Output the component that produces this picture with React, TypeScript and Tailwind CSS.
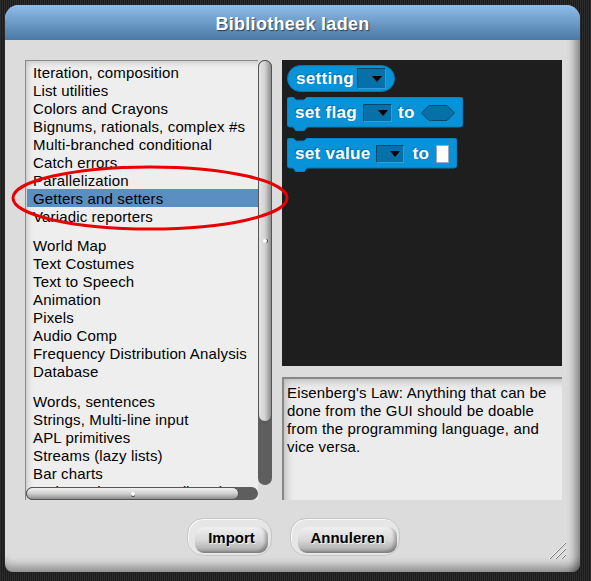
import React from "react";

const groups: { items: string[]; gapAfter?: string }[] = [
  {
    items: [
      "Iteration, composition",
      "List utilities",
      "Colors and Crayons",
      "Bignums, rationals, complex #s",
      "Multi-branched conditional",
      "Catch errors",
      "Parallelization",
      "Getters and setters",
      "Variadic reporters",
    ],
    gapAfter: "h-[11px]",
  },
  {
    items: [
      "World Map",
      "Text Costumes",
      "Text to Speech",
      "Animation",
      "Pixels",
      "Audio Comp",
      "Frequency Distribution Analysis",
      "Database",
    ],
    gapAfter: "h-[12px]",
  },
  {
    items: [
      "Words, sentences",
      "Strings, Multi-line input",
      "APL primitives",
      "Streams (lazy lists)",
      "Bar charts",
      "Web services access (https)",
    ],
  },
];

function Drop({ className }: { className: string }) {
  return (
    <div
      className={
        "flex items-center justify-end pr-[3px] bg-[#0670a8] border border-t-[#03466b] border-l-[#03466b] border-b-[#2a9fd9] border-r-[#2a9fd9] " +
        className
      }
    >
      <div className="w-0 h-0 border-l-[5px] border-r-[5px] border-t-[6px] border-l-transparent border-r-transparent border-t-black" />
    </div>
  );
}

function Cmd({ w, className, children }: { w: number; className: string; children: React.ReactNode }) {
  const H = 30;
  const d = `M0,3 Q0,0 3,0 H6 L9,3 H17 L20,0 H${w - 3} Q${w},0 ${w},3 V${H - 3} Q${w},${H} ${w - 3},${H} H20 L17,${H + 4} H9 L6,${H} H3 Q0,${H} 0,${H - 3} Z`;
  return (
    <div className={"relative h-[34px] " + className}>
      <svg className="absolute inset-0" width={w} height={34} viewBox={`0 0 ${w} 34`}>
        <path d={d} fill="#0892d8" stroke="#0378b4" strokeWidth="1" />
      </svg>
      <div className="relative h-[30px] flex items-center pl-[8px] pt-[1px] text-white font-bold text-[17px] tracking-[0.3px] [text-shadow:-1px_-1px_0_rgba(0,0,0,0.25)]">
        {children}
      </div>
    </div>
  );
}

export default function App() {
  return (
    <div className="relative w-[591px] h-[581px] overflow-hidden pt-[5px] pl-[5px] bg-[repeating-linear-gradient(90deg,#2c2c2c_0px,#2c2c2c_1px,#1b1b1b_1px,#1b1b1b_2px)] font-['Liberation_Sans',Arial,sans-serif]">
      <div className="relative w-[575px] h-[567px] flex flex-col rounded-t-[14px] rounded-b-[8px] overflow-hidden bg-[#dcdcdc] shadow-[inset_-12px_0_10px_-8px_rgba(0,0,0,0.45),inset_0_-14px_10px_-8px_rgba(0,0,0,0.35)]">
        {/* title */}
        <div className="h-[35px] shrink-0 flex items-center justify-center pt-[4px] bg-gradient-to-b from-[#8fbeeb] to-[#4a79a5] text-white font-bold text-[18px] tracking-[0.3px] [text-shadow:1px_1px_1px_rgba(0,0,0,0.55)]">
          Bibliotheek laden
        </div>

        {/* body */}
        <div className="flex gap-[10px] pl-[20px] pt-[20px]">
          {/* left column */}
          <div className="flex w-[247px] h-[440px]">
            <div className="relative w-[233px] h-[440px] overflow-hidden bg-[#eeeeee] border-t border-l border-[#8a8a8a] shadow-[inset_4px_4px_6px_-3px_rgba(0,0,0,0.2)] pt-[2px] pl-[1px] text-[15px] leading-[18px] tracking-[0.15px] text-black">
              {groups.map((g, gi) => (
                <div key={gi}>
                  {g.items.map((t) => (
                    <div
                      key={t}
                      className={
                        "h-[18px] pl-[6px] pt-[1px] whitespace-nowrap " +
                        (t === "Getters and setters" ? "bg-[#5b8fc2]" : "")
                      }
                    >
                      {t}
                    </div>
                  ))}
                  {g.gapAfter && <div className={g.gapAfter} />}
                </div>
              ))}
              {/* horizontal scrollbar */}
              <div className="absolute left-0 bottom-0 w-[232px] h-[13px] rounded-full bg-[#5e5e5e]">
                <div className="relative w-[213px] h-[13px] rounded-full border border-[#555] bg-gradient-to-b from-[#f2f2f2] via-[#cfcfcf] to-[#8e8e8e] flex items-center justify-center">
                  <div className="w-[4px] h-[4px] rounded-full bg-white shadow-[0_1px_0_#444]" />
                </div>
              </div>
            </div>
            {/* vertical scrollbar */}
            <div className="w-[14px] h-[425px] rounded-full bg-[#5e5e5e]">
              <div className="w-[14px] h-[362px] rounded-full border border-[#555] bg-gradient-to-r from-[#e4e4e4] via-[#d2d2d2] to-[#8e8e8e] flex items-center justify-center">
                <div className="w-[4px] h-[4px] rounded-full bg-white shadow-[1px_0_0_#444]" />
              </div>
            </div>
          </div>

          {/* right column */}
          <div className="w-[280px] flex flex-col gap-[11px]">
            <div className="h-[306px] bg-[#1e1e1e] p-[5px] flex flex-col items-start">
              {/* setting reporter */}
              <div className="h-[27px] w-[108px] rounded-full bg-[#0892d8] border border-[#0378b4] flex items-center pl-[8px] gap-[3px] text-white font-bold text-[17px] tracking-[0.3px] [text-shadow:-1px_-1px_0_rgba(0,0,0,0.25)]">
                <span>setting</span>
                <Drop className="w-[29px] h-[21px]" />
              </div>

              <Cmd w={176} className="w-[176px] mt-[5px]">
                <span>set flag</span>
                <Drop className="ml-[6px] w-[29px] h-[18px]" />
                <span className="ml-[6px]">to</span>
                <svg className="ml-[6px]" width="34" height="16" viewBox="0 0 34 16">
                  <polygon points="0.5,8 8,0.5 26,0.5 33.5,8 26,15.5 8,15.5" fill="#0670a8" stroke="#03466b" strokeWidth="1" />
                </svg>
              </Cmd>

              <Cmd w={170} className="w-[170px] mt-[7px]">
                <span>set value</span>
                <Drop className="ml-[6px] w-[28px] h-[18px]" />
                <span className="ml-[8px]">to</span>
                <div className="ml-[7px] w-[13px] h-[18px] bg-white border border-[#9ab]" />
              </Cmd>
            </div>

            <div className="h-[123px] bg-[#ececec] border-t-2 border-l-2 border-[#878787] shadow-[inset_7px_7px_8px_-5px_rgba(0,0,0,0.22)] pl-[3px] pt-[5px] text-[15px] leading-[18px] tracking-[0.15px] text-black">
              <div className="whitespace-nowrap">Eisenberg's Law: Anything that can be</div>
              <div className="whitespace-nowrap">done from the GUI should be doable</div>
              <div className="whitespace-nowrap">from the programming language, and</div>
              <div className="whitespace-nowrap">vice versa.</div>
            </div>
          </div>
        </div>

        {/* buttons */}
        <div className="flex justify-center gap-[18px] mt-[18px] pl-[2px]">
          {[
            { label: "Import", outer: "w-[85px]", inner: "w-[73px]" },
            { label: "Annuleren", outer: "w-[110px]", inner: "w-[99px]" },
          ].map((b) => (
            <div
              key={b.label}
              className={
                "h-[38px] rounded-[16px] bg-[#e6e6e6] border border-[#c6c6c6] shadow-[inset_1px_1px_0_#f8f8f8] pl-[7px] pt-[8px] " +
                b.outer
              }
            >
              <div
                className={
                  "h-[26px] rounded-[9px] bg-gradient-to-b from-[#f0f0f0] via-[#d8d8d8] to-[#a6a6a6] shadow-[inset_-3px_-2px_3px_rgba(0,0,0,0.25)] flex items-center justify-center pb-[3px] text-black font-bold text-[15px] [text-shadow:1px_1px_0_rgba(255,255,255,0.7)] " +
                  b.inner
                }
              >
                {b.label}
              </div>
            </div>
          ))}
        </div>

        {/* resize handle */}
        <svg className="absolute right-[13px] bottom-[12px]" width="20" height="20" viewBox="0 0 20 20">
          <line x1="19" y1="2" x2="2" y2="19" stroke="#f4f4f4" strokeWidth="1" />
          <line x1="19" y1="3" x2="3" y2="19" stroke="#7a7a7a" strokeWidth="1" />
          <line x1="19" y1="8" x2="8" y2="19" stroke="#f4f4f4" strokeWidth="1" />
          <line x1="19" y1="9" x2="9" y2="19" stroke="#7a7a7a" strokeWidth="1" />
          <line x1="19" y1="14" x2="14" y2="19" stroke="#f4f4f4" strokeWidth="1" />
          <line x1="19" y1="15" x2="15" y2="19" stroke="#7a7a7a" strokeWidth="1" />
        </svg>
      </div>

      {/* red annotation ellipse */}
      <svg className="absolute inset-0 pointer-events-none" width="591" height="581" viewBox="0 0 591 581">
        <ellipse cx="150" cy="198" rx="137" ry="31" fill="none" stroke="#e60000" strokeWidth="3" />
      </svg>
    </div>
  );
}
